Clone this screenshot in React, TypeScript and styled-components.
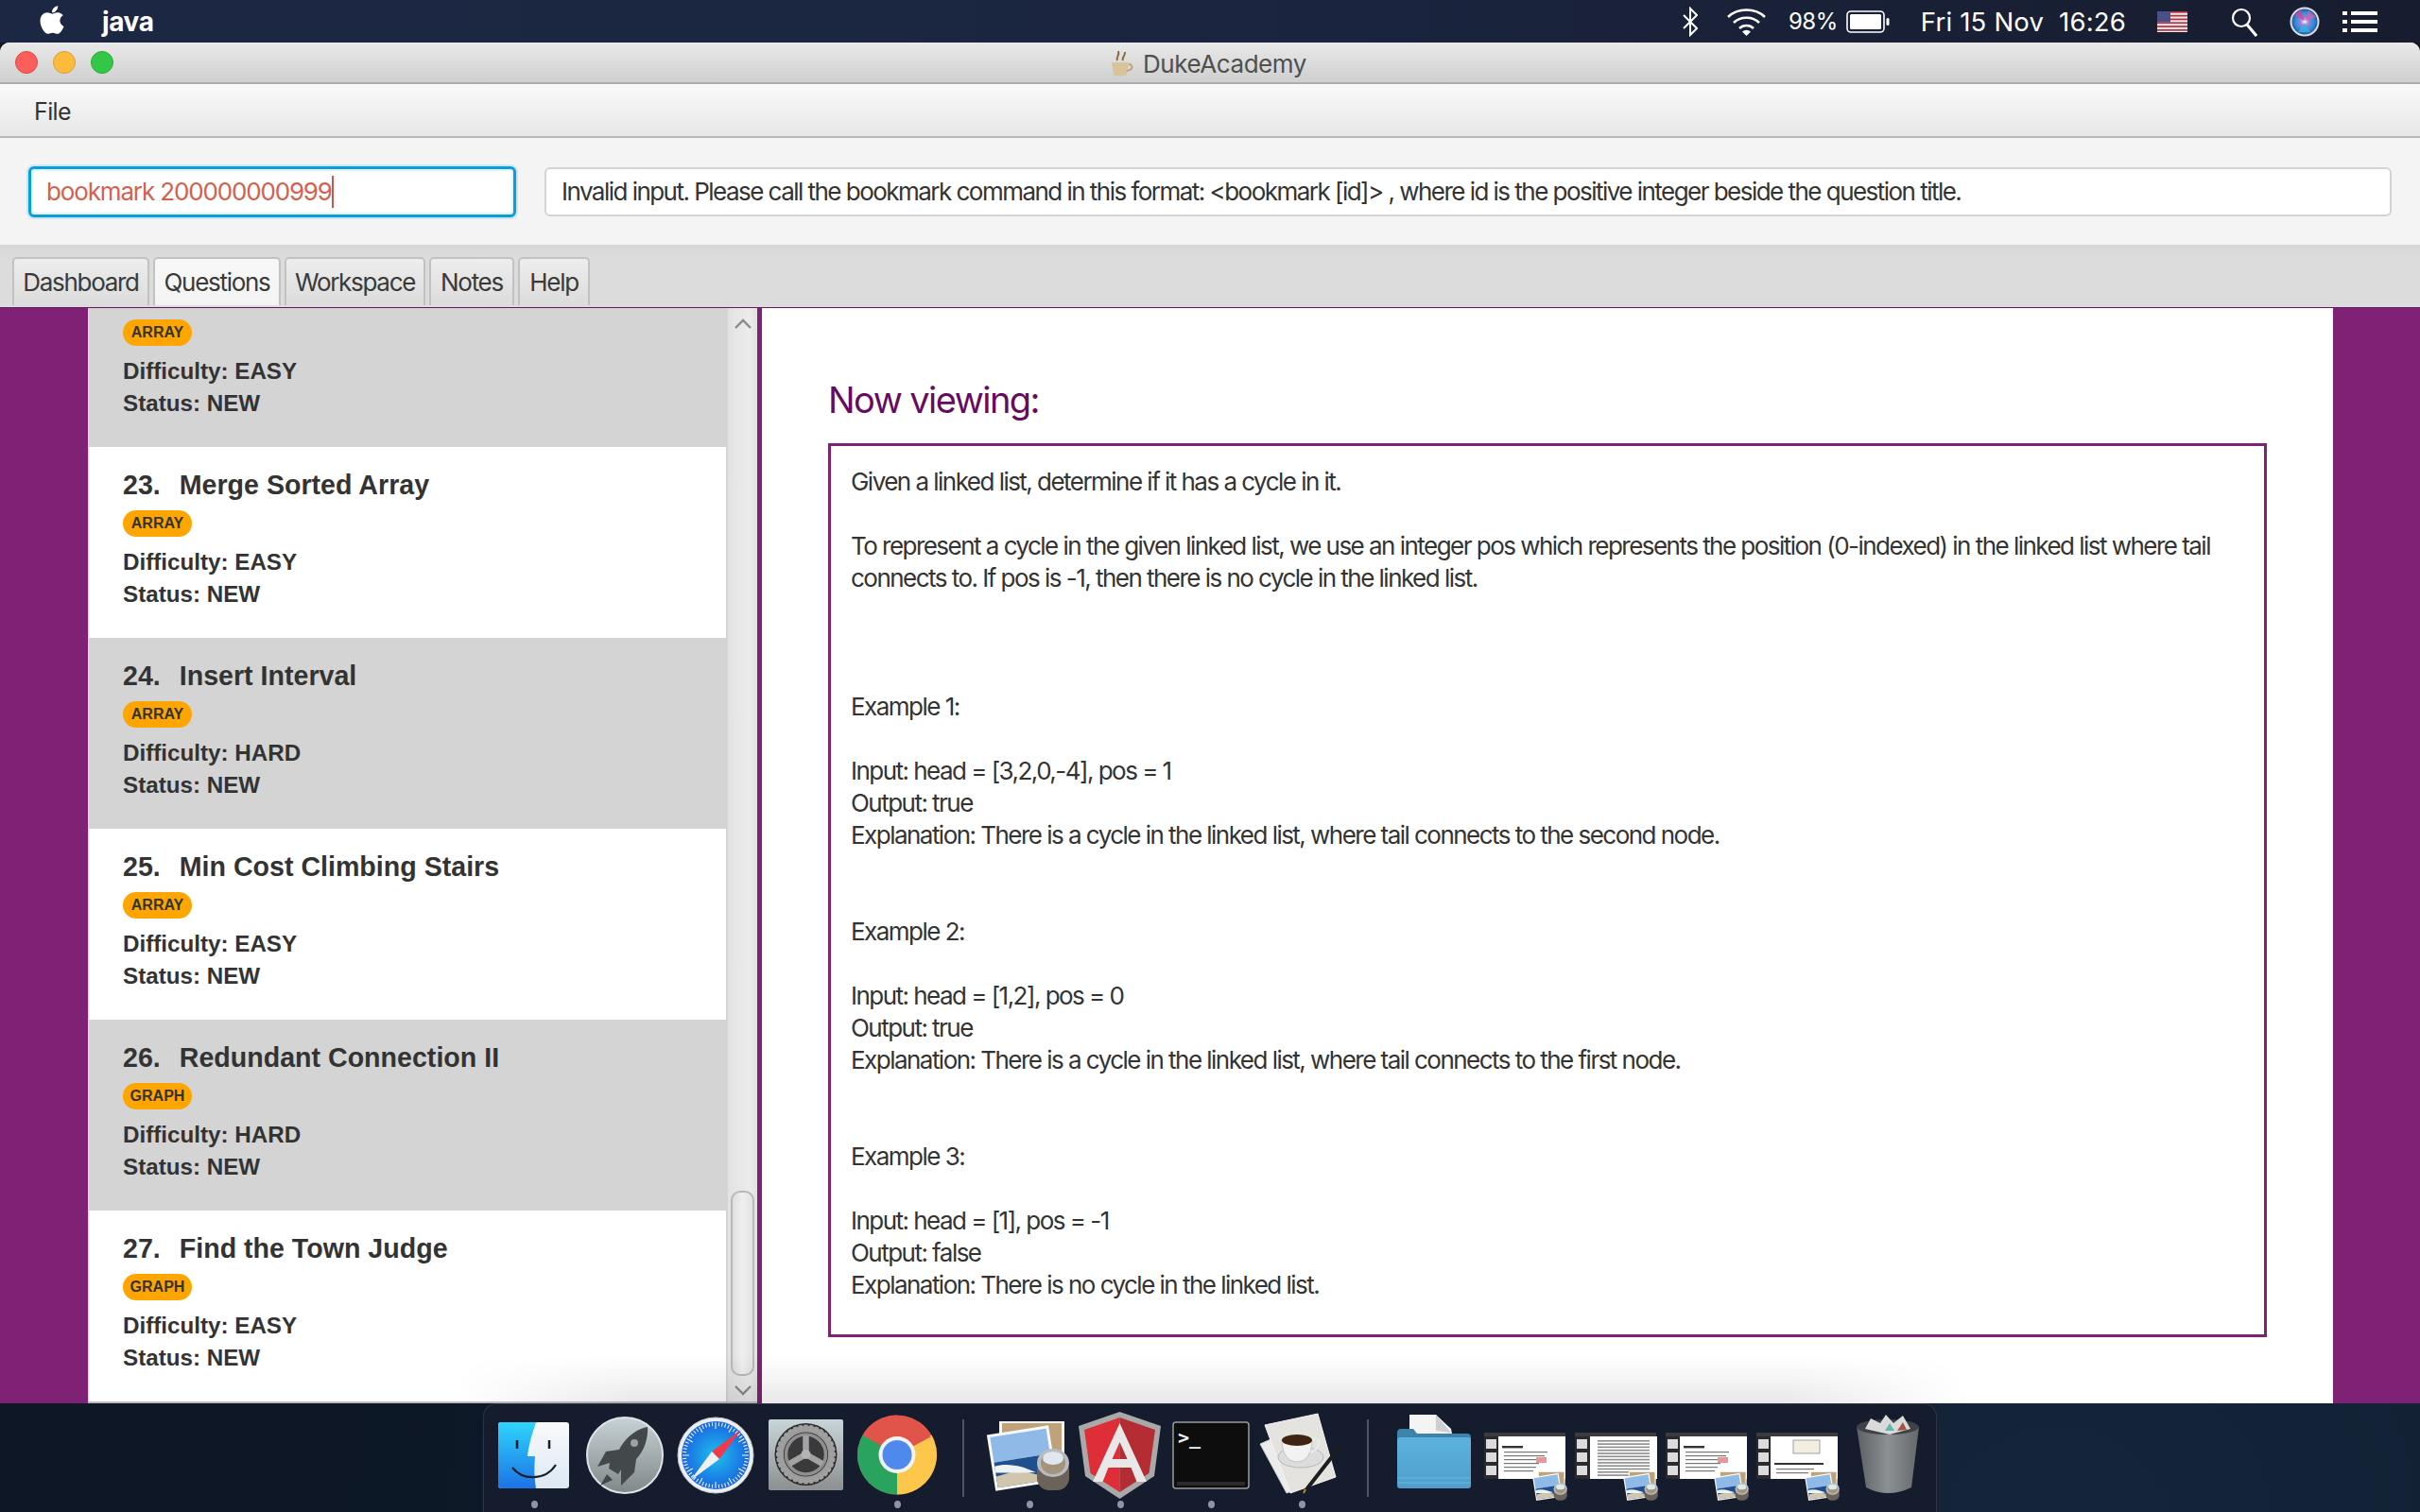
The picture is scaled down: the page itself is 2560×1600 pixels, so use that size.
import React from "react";
import styled, { createGlobalStyle } from "styled-components";
import { FaApple } from "react-icons/fa";

const Global = createGlobalStyle`
  html, body { margin: 0; padding: 0; background: #0f1a2b; }
  body { width: 2560px; height: 1600px; overflow: hidden; font-family: Inter, "Liberation Sans", sans-serif; }
  * { box-sizing: border-box; }
`;

const Screen = styled.div`
  width: 2560px; height: 1600px; display: flex; flex-direction: column; position: relative; overflow: hidden;
  background: radial-gradient(ellipse at 85% 100%, #14253a 0%, #0d1726 60%);
`;
const MenuBar = styled.header`
  height: 45px; flex: none; display: flex; align-items: center; padding: 0 45px 0 39px; color: #fff;
  background: linear-gradient(90deg, #1c2843 0%, #1b2540 50%, #171d2f 100%);
`;
const AppleMark = styled(FaApple)` width: 32px; height: 34px; margin-right: 37px; margin-top: -4px; `;
const AppName = styled.span` font-weight: 700; font-size: 28px; letter-spacing: -0.4px; `;
const Spacer = styled.div` flex: 1; `;
const StatusText = styled.span<{ $gap: number; $size: number; $track: number }>`
  font-size: ${p => p.$size}px; letter-spacing: ${p => p.$track}px; margin-left: ${p => p.$gap}px; white-space: pre;
`;
const StatusIcon = styled.svg<{ $gap: number }>` margin-left: ${p => p.$gap}px; flex: none; display: block; `;

const Window = styled.main`
  height: 1440px; flex: none; display: flex; flex-direction: column; position: relative;
  border-radius: 10px 10px 0 0; overflow: hidden; background: #f4f4f4;
`;
const TitleBar = styled.div`
  height: 44px; flex: none; position: relative; display: flex; align-items: center; justify-content: center; gap: 9px;
  background: linear-gradient(#e9e9e9, #cfcfcf); border-bottom: 2px solid #adadad;
  padding: 2px 6px 0 0; color: #4f4f4f; font-size: 26px; letter-spacing: -0.45px;
`;
const Lights = styled.div` position: absolute; left: 16px; top: 9px; display: flex; gap: 16px; `;
const Light = styled.span<{ $c: string; $b: string }>`
  width: 24px; height: 24px; border-radius: 50%; background: ${p => p.$c}; border: 1px solid ${p => p.$b};
`;
const MenuStrip = styled.nav`
  height: 57px; flex: none; display: flex; align-items: center; padding: 2px 0 0 36px;
  background: linear-gradient(#fafafa, #e7e7e7); border-bottom: 2px solid #b6b6b6;
  font-size: 25px; letter-spacing: -0.6px; color: #333;
`;
const CommandBar = styled.section`
  height: 113px; flex: none; display: flex; align-items: center; gap: 30px; padding: 0 30px; background: #f4f4f4;
`;
const CommandInput = styled.div`
  width: 516px; height: 54px; flex: none; display: flex; align-items: center; padding-left: 16px; background: #fff;
  border: 3px solid #0a9ed9; border-radius: 6px; box-shadow: 0 0 0 2px #cde6f3, inset 0 0 0 2px #e4f4fb;
  font-size: 26px; letter-spacing: -1.15px; color: #d5604e;
`;
const Caret = styled.span` display: inline-block; width: 2px; height: 34px; background: #c9584a; `;
const ResultBox = styled.div`
  flex: 1; height: 52px; display: flex; align-items: center; padding-left: 16px; background: #fff;
  border: 2px solid #d4d4d4; border-radius: 6px; font-size: 26px; letter-spacing: -1.53px; color: #333; white-space: pre;
`;
const TabStrip = styled.div`
  height: 66px; flex: none; display: flex; align-items: flex-end; gap: 4px; padding: 0 0 2px 13px;
  background: linear-gradient(#d6d6d6, #dcdcdc 20%);
`;
const Tab = styled.div<{ $w: number; $active?: boolean }>`
  width: ${p => p.$w}px; height: 51px; display: flex; align-items: center; justify-content: center;
  border: 2px solid #c2c2c2; border-bottom: none; border-radius: 5px 5px 0 0; color: #3a3a3a;
  background: ${p => (p.$active ? "linear-gradient(#f8f8f8, #f3f3f3)" : "linear-gradient(#ededed, #dcdcdc)")};
  font-size: 26px; letter-spacing: -1.3px;
`;
const Body = styled.div`
  flex: 1; min-height: 0; display: flex; background: #7f2175; padding: 0 92px 0 93px; position: relative; border-top: 1px solid #5e1a5a;
`;
const ListPane = styled.div`
  width: 708px; flex: none; display: flex; background: #d4d4d4; border-bottom: 2px solid #bdbdbd;
`;
const Cards = styled.div`
  width: 677px; flex: none; display: flex; flex-direction: column; justify-content: flex-end; overflow: hidden;
`;
const Card = styled.article<{ $white: boolean; $clipped?: boolean }>`
  height: ${p => (p.$clipped ? "148px" : "202px")}; flex: none; color: #333; font-family: "Liberation Sans", Arial, sans-serif;
  padding: ${p => (p.$clipped ? "13px" : "24px")} 0 0 36px; margin-right: 2px; margin-left: 1px;
  background: ${p => (p.$white ? "#fff" : "#d4d4d4")};
`;
const CardTitle = styled.h3`
  margin: 0; display: flex; gap: 20px; height: 32px; align-items: center; font-size: 28.6px; font-weight: 700;
`;
const Badge = styled.span<{ $topless?: boolean }>`
  display: block; width: 73px; height: 28px; margin-top: ${p => (p.$topless ? 0 : "11px")}; border-radius: 14px; background: #ffa500; text-align: center;
  font-size: 16px; line-height: 28px; font-weight: 700; color: #333;
`;
const Meta = styled.p`
  margin: 0; font-size: 24.2px; font-weight: 700; line-height: 34px;
  &:first-of-type { margin-top: 10px; }
`;
const Scroll = styled.div`
  width: 31px; flex: none; display: flex; flex-direction: column; align-items: center; background: linear-gradient(90deg, #e2e2e2, #ececec 70%, #e2e2e2);
`;
const Arrow = styled.svg` flex: none; display: block; margin: 10px 0 5px; `;
const Thumb = styled.div`
  width: 25px; height: 196px; margin-top: auto; flex: none; border: 2px solid #b9b9b9; border-radius: 10px; background: linear-gradient(90deg, #dedede, #f0f0f0 50%, #e2e2e2);
`;
const Detail = styled.section`
  flex: 1; min-width: 0; margin-left: 5px; background: #fff; padding: 69px 70px 0 70px; display: flex; flex-direction: column;
`;
const Heading = styled.h2`
  margin: 0 0 18px; height: 56px; line-height: 56px; font-size: 38px; font-weight: 400; letter-spacing: -1.55px; color: #660b5f;
`;
const Question = styled.pre`
  margin: 0; height: 946px; border: 3px solid #7f2175; padding: 21px 20px 21px 21px; font-family: inherit; white-space: pre-wrap;
  font-size: 26px; letter-spacing: -1.53px; line-height: 34px; color: #333;
`;
const Shade = styled.div`
  position: absolute; left: 480px; right: 480px; bottom: 0; height: 50px; pointer-events: none;
  background: linear-gradient(rgba(0,0,0,0), rgba(0,0,0,.09));
  mask-image: linear-gradient(90deg, transparent, #000 12%, #000 88%, transparent);
`;
const DockRow = styled.footer` flex: 1; min-height: 0; display: flex; justify-content: flex-start; padding-left: 511px; `;
const Dock = styled.nav`
  width: 1538px; display: flex; padding: 6px 0 0 5px; align-items: flex-start;
  background: #151c2d; border: 1px solid #2f3444; border-bottom: none; border-radius: 14px 14px 0 0;
`;
const Slot = styled.div` width: 96px; flex: none; display: flex; flex-direction: column; align-items: center; `;
const Dot = styled.span<{ $on: boolean }>`
  width: 7px; height: 8px; border-radius: 50%; background: ${p => (p.$on ? "#8f95a5" : "transparent")};
`;
const DockIcon = styled.svg` display: block; width: 96px; height: 96px; `;
const Divider = styled.div` width: 2px; height: 82px; margin: 10px 21px 0; flex: none; background: #4d5361; `;

const Finder = () => (
  <DockIcon viewBox="0 0 96 96">
    <defs>
      <linearGradient id="fb" x1="0" y1="0" x2="0" y2="1"><stop offset="0" stopColor="#2ed5fb" /><stop offset="1" stopColor="#1c72e6" /></linearGradient>
      <linearGradient id="fw" x1="0" y1="0" x2="0" y2="1"><stop offset="0" stopColor="#fafafa" /><stop offset="1" stopColor="#dce8f3" /></linearGradient>
    </defs>
    <rect x="10" y="13" width="75" height="70" rx="3" fill="url(#fw)" />
    <path d="M13 13H50C46 25 42 38 41 49H49C48 60 48 72 50 83H13a3 3 0 0 1-3-3V16a3 3 0 0 1 3-3Z" fill="url(#fb)" />
    <path d="M30 32v9M64 32v9" stroke="#1a1f2c" strokeWidth="2.5" />
    <path d="M25 61C36 75 60 75 71 58" fill="none" stroke="#16202e" strokeWidth="2.2" />
  </DockIcon>
);
const Rocket = () => (
  <DockIcon viewBox="0 0 96 96">
    <defs>
      <linearGradient id="rg" x1="0" y1="0" x2="0" y2="1"><stop offset="0" stopColor="#c8d3d6" /><stop offset="1" stopColor="#7f8789" /></linearGradient>
    </defs>
    <circle cx="48" cy="48" r="40" fill="url(#rg)" stroke="#dfe3e4" strokeWidth="2" />
    <path d="M72 18C60 20 48 30 42 42L28 44 19 60 32 56 31 62 41 68 44 63 44 80 58 66 60 52C68 44 73 30 72 18Z" fill="#43484b" />
    <circle cx="58" cy="35" r="4" fill="#9aa2a5" />
    <path d="M29 68 22 80 35 74Z" fill="#43484b" />
  </DockIcon>
);
const Safari = () => (
  <DockIcon viewBox="0 0 96 96">
    <defs>
      <radialGradient id="sg"><stop offset="0" stopColor="#1dc0ee" /><stop offset="1" stopColor="#1a66e0" /></radialGradient>
    </defs>
    <circle cx="48" cy="48" r="40" fill="#eceff2" stroke="#c3c7cc" />
    <circle cx="48" cy="48" r="36" fill="url(#sg)" />
    {Array.from({ length: 60 }, (_, i) => (
      <line key={i} x1="48" y1="13" x2="48" y2={i % 5 === 0 ? 20 : 17} stroke="#fff" strokeWidth="1" transform={`rotate(${i * 6} 48 48)`} />
    ))}
    <path d="M75 21 52 52 44 44Z" fill="#f2394a" />
    <path d="M21 75 44 44 52 52Z" fill="#eef0f2" />
  </DockIcon>
);
const Settings = () => (
  <DockIcon viewBox="0 0 96 96">
    <defs>
      <linearGradient id="sb" x1="0" y1="0" x2="0" y2="1"><stop offset="0" stopColor="#c9d5da" /><stop offset="1" stopColor="#8d8f90" /></linearGradient>
    </defs>
    <rect x="8" y="10" width="79" height="75" rx="2" fill="url(#sb)" />
    <circle cx="47.5" cy="47" r="33" fill="#2a2a2c" />
    <circle cx="47.5" cy="47" r="27" fill="none" stroke="#9b9b9b" strokeWidth="7" />
    {Array.from({ length: 32 }, (_, i) => (
      <rect key={i} x="45.5" y="15.5" width="4" height="6" fill="#a0a0a0" transform={`rotate(${i * 11.25} 47.5 47)`} />
    ))}
    <circle cx="47.5" cy="47" r="23" fill="#3a3a3c" />
    <circle cx="47.5" cy="47" r="21" fill="none" stroke="#8f8f8f" strokeWidth="3.5" />
    <g stroke="#a2a2a2" strokeWidth="6.5" strokeLinecap="butt">
      <path d="M47.5 47V27M47.5 47 30 57M47.5 47 65 57" />
    </g>
    <circle cx="47.5" cy="47" r="5" fill="#b4b4b4" />
  </DockIcon>
);
const Chrome = () => (
  <DockIcon viewBox="0 0 96 96">
    <circle cx="48" cy="47.5" r="42" fill="#e0544a" />
    <path d="M48 47.5 84.4 26.5A42 42 0 0 1 48 89.5Z" fill="#fdc74c" />
    <path d="M48 47.5 48 89.5A42 42 0 0 1 11.6 26.5Z" fill="#2aa35e" />
    <path d="M48 47.5 11.6 26.5A42 42 0 0 1 48 5.5Z" fill="#e0544a" />
    <path d="M48 28H84.4L48 47.5Z" fill="#df5349" />
    <circle cx="48" cy="47.5" r="19.5" fill="#f3f3f3" />
    <circle cx="48" cy="47.5" r="15.5" fill="#5089ee" />
  </DockIcon>
);
const Loupe = ({ x, y, s }: { x: number; y: number; s: number }) => (
  <g transform={`translate(${x} ${y}) scale(${s})`}>
    <rect x="0" y="10" width="34" height="34" rx="13" fill="#6b635a" />
    <ellipse cx="17" cy="15" rx="17" ry="15" fill="#b9bcbf" />
    <ellipse cx="17" cy="15" rx="13" ry="12" fill="#a5937d" />
    <ellipse cx="17" cy="10" rx="11" ry="7" fill="#dfe8ef" />
  </g>
);
const Photo = () => (
  <>
    <rect x="16" y="12" width="69" height="42" fill="#f6f4ee" />
    <rect x="19" y="14" width="63" height="38" fill="#bda27a" />
    <g transform="rotate(-9 40 50)">
      <rect x="7" y="21" width="66" height="60" fill="#f7f7f7" />
      <rect x="10" y="24" width="60" height="27" fill="#8fb9e6" />
      <rect x="10" y="51" width="60" height="27" fill="#1f4f8c" />
      <path d="M10 66 35 63 70 78H10Z" fill="#d0c5ad" />
      <path d="M10 55C25 53 40 60 52 68L35 66 10 62Z" fill="#eef2f5" />
    </g>
  </>
);
const Preview = () => (
  <DockIcon viewBox="0 0 96 96">
    <Photo />
    <Loupe x={56} y={41} s={1} />
  </DockIcon>
);
const Angular = () => (
  <DockIcon viewBox="0 0 96 96">
    <path d="M47.5 2 4 17 11 70 47.5 94 84 70 91 17Z" fill="#a9a9a9" />
    <path d="M47.5 8 10 21 16.5 67 47.5 87Z" fill="#de2f38" />
    <path d="M47.5 8 85 21 78.5 67 47.5 87Z" fill="#b42d32" />
    <path d="M47.5 14 19 76H29.5L35.5 61H59.5L65.5 76H76ZM47.5 34 55.5 52H39.5Z" fill="#e8e8e8" fillRule="evenodd" />
  </DockIcon>
);
const TermGlyph = styled.text` font-family: "DejaVu Sans Mono", monospace; font-size: 20px; font-weight: 700; fill: #f2f2f2; `;
const Terminal = () => (
  <DockIcon viewBox="0 0 96 96">
    <rect x="8" y="13" width="80" height="70" rx="3" fill="#0d0d0d" stroke="#9b9b9b" strokeWidth="1.5" />
    <rect x="12" y="76" width="72" height="4" fill="#2b2b2b" />
    <TermGlyph x="13" y="36">&gt;_</TermGlyph>
  </DockIcon>
);
const TextEdit = () => (
  <DockIcon viewBox="0 0 96 96">
    <path d="M4 36 36 22 62 76 32 88Z" fill="#ececec" stroke="#cfcfcf" />
    <path d="M9 16 65 4 84 71 36 88Z" fill="#e4e3e0" stroke="#f5f5f5" />
    <ellipse cx="47" cy="50" rx="24" ry="11" fill="#dcdcdc" stroke="#b8b8b8" />
    <path d="M27 32C30 27 56 27 59 32 59 44 54 55 43 55 32 55 27 44 27 32Z" fill="#f2f2f2" stroke="#c3c3c3" />
    <ellipse cx="43" cy="32" rx="16" ry="6" fill="#3e2411" />
    <path d="M59 31c10-4 10 10-2 14" fill="none" stroke="#e9e9e9" strokeWidth="3" />
    <path d="M50 88 89 38" stroke="#1d1d1d" strokeWidth="4" />
    <path d="M50 88 52 84" stroke="#b58c3b" strokeWidth="2" />
  </DockIcon>
);
const Folder = () => (
  <DockIcon viewBox="0 0 96 96">
    <defs>
      <linearGradient id="fd" x1="0" y1="0" x2="0" y2="1"><stop offset="0" stopColor="#5cb2de" /><stop offset="1" stopColor="#4f9ecb" /></linearGradient>
    </defs>
    <path d="M22 5H50L66 20 70 40H22Z" fill="#f4f4f4" />
    <path d="M50 5 66 24 50 22Z" fill="#cfcfcf" />
    <path d="M9 24q0-4 4-4H26l4 5H83q4 0 4 4V35H9Z" fill="#3f83ab" />
    <rect x="9" y="29" width="78" height="54" rx="3" fill="url(#fd)" />
    <path d="M9 72H87M9 77H87" stroke="#6cb6dc" strokeWidth="1" />
  </DockIcon>
);
type DocKind = 0 | 1 | 2 | 3;
const MiniDoc = ({ kind }: { kind: DocKind }) => (
  <DockIcon viewBox="0 0 96 96">
    <rect x="5" y="24" width="86" height="49" fill="#2a2a2c" />
    <rect x="5" y="24" width="86" height="4" fill="#3b3b3d" />
    <rect x={kind === 1 ? 21 : 20} y="28" width="71" height="45" fill="#fff" />
    {[0, 1, 2].map(i => (
      <rect key={i} x="7" y={31 + i * 14} width="11" height="10" fill="#dcdcdc" />
    ))}
    {kind === 1 ? (
      Array.from({ length: 12 }, (_, i) => <rect key={i} x="29" y={32 + i * 3.3} width="55" height="1.6" fill="#8c8c8c" />)
    ) : kind === 3 ? (
      <>
        <rect x="44" y="32" width="28" height="14" fill="#f2efe0" stroke="#8c8c8c" strokeWidth=".8" />
        <rect x="24" y="56" width="52" height="2" fill="#333" />
        <rect x="26" y="62" width="40" height="1.2" fill="#777" />
        <rect x="26" y="66" width="34" height="1.2" fill="#777" />
      </>
    ) : (
      <>
        <rect x="24" y="38" width="22" height="2.4" fill="#333" />
        {[44, 48, 52, 56, 60, 64].map((y, i) => (
          <rect key={y} x="26" y={y} width={46 - i * 3} height="1.2" fill="#777" />
        ))}
        <rect x="60" y="50" width="11" height="6" fill="#e79797" />
      </>
    )}
    <g transform="translate(55 60) scale(.42)">
      <Photo />
      <Loupe x={56} y={41} s={1} />
    </g>
  </DockIcon>
);
const Trash = () => (
  <DockIcon viewBox="0 0 96 96">
    <defs>
      <linearGradient id="tg" x1="0" y1="0" x2="1" y2="0"><stop offset="0" stopColor="#5c6063" /><stop offset=".5" stopColor="#8d9093" /><stop offset="1" stopColor="#64686b" /></linearGradient>
    </defs>
    <path d="M15 18 81 18 73 82Q48 94 25 82Z" fill="url(#tg)" />
    <ellipse cx="48" cy="18" rx="33" ry="8" fill="#3f4347" />
    <path d="M24 20 30 9 40 14 46 5 54 14 64 6 72 20 50 26Z" fill="#dadada" />
    <path d="M45 22 50 14 55 22Z" fill="#5fb8a8" />
    <path d="M58 22 64 13 68 21Z" fill="#a8523d" />
  </DockIcon>
);

const Duke = () => (
  <svg width="28" height="30" viewBox="0 0 28 30">
    <path d="M4 14h18l-2 13q-7 3-14 0Z" fill="#d8c39a" />
    <path d="M22 16c5 0 5 6-2 7" fill="none" stroke="#bca67c" strokeWidth="2" />
    <path d="M10 12c-2-4 3-5 1-10M16 12c-2-3 3-5 2-9" fill="none" stroke="#8a6a3b" strokeWidth="2" />
  </svg>
);

const questionText = `Given a linked list, determine if it has a cycle in it.

To represent a cycle in the given linked list, we use an integer pos which represents the position (0-indexed) in the linked list where tail
connects to. If pos is -1, then there is no cycle in the linked list.



Example 1:

Input: head = [3,2,0,-4], pos = 1
Output: true
Explanation: There is a cycle in the linked list, where tail connects to the second node.


Example 2:

Input: head = [1,2], pos = 0
Output: true
Explanation: There is a cycle in the linked list, where tail connects to the first node.


Example 3:

Input: head = [1], pos = -1
Output: false
Explanation: There is no cycle in the linked list.`;

const tabs = [
  { label: "Dashboard", w: 145 },
  { label: "Questions", w: 135, active: true },
  { label: "Workspace", w: 149 },
  { label: "Notes", w: 90 },
  { label: "Help", w: 76 },
];
const questions = [
  { tag: "ARRAY", diff: "EASY" },
  { no: "23.", title: "Merge Sorted Array", tag: "ARRAY", diff: "EASY" },
  { no: "24.", title: "Insert Interval", tag: "ARRAY", diff: "HARD" },
  { no: "25.", title: "Min Cost Climbing Stairs", tag: "ARRAY", diff: "EASY" },
  { no: "26.", title: "Redundant Connection II", tag: "GRAPH", diff: "HARD" },
  { no: "27.", title: "Find the Town Judge", tag: "GRAPH", diff: "EASY" },
];
const dockA = [
  { el: <Finder />, on: true }, { el: <Rocket />, on: false }, { el: <Safari />, on: false },
  { el: <Settings />, on: false }, { el: <Chrome />, on: true },
];
const dockB = [
  { el: <Preview />, on: true }, { el: <Angular />, on: true }, { el: <Terminal />, on: true }, { el: <TextEdit />, on: true },
];
const dockC = [
  { el: <Folder />, on: false }, { el: <MiniDoc kind={0} />, on: false }, { el: <MiniDoc kind={1} />, on: false },
  { el: <MiniDoc kind={2} />, on: false }, { el: <MiniDoc kind={3} />, on: false }, { el: <Trash />, on: false },
];
const renderSlots = (items: { el: React.ReactNode; on: boolean }[]) =>
  items.map((it, i) => (
    <Slot key={i}>
      {it.el}
      <Dot $on={it.on} />
    </Slot>
  ));

export default function App() {
  return (
    <Screen>
      <Global />
      <MenuBar>
        <AppleMark />
        <AppName>java</AppName>
        <Spacer />
        <StatusIcon $gap={0} width="16" height="32" viewBox="0 0 16 32" fill="none" stroke="#fff" strokeWidth="2">
          <path d="M1 9 15 23 8 30V2L15 9 1 23" />
        </StatusIcon>
        <StatusIcon $gap={30} width="43" height="32" viewBox="0 0 43 32" fill="none" stroke="#fff" strokeWidth="2.6">
          <path d="M2 11C12 1 31 1 41 11M8 17C15 10 28 10 35 17M14 23C18 19 25 19 29 23" />
          <path d="M21.5 31 17 26.5Q21.5 23 26 26.5Z" fill="#fff" stroke="none" />
        </StatusIcon>
        <StatusText $gap={23} $size={24} $track={-0.5}>98%</StatusText>
        <StatusIcon $gap={9} width="46" height="24" viewBox="0 0 46 24">
          <rect x="1" y="1" width="39" height="22" rx="4" fill="none" stroke="#fff" strokeWidth="1.6" />
          <rect x="4" y="4" width="33" height="16" rx="1.5" fill="#fff" />
          <rect x="42.5" y="8" width="3" height="8" rx="1.5" fill="#fff" />
        </StatusIcon>
        <StatusText $gap={33} $size={27.5} $track={0.2}>Fri 15 Nov  16:26</StatusText>
        <StatusIcon $gap={33} width="32" height="22" viewBox="0 0 32 22">
          <rect width="32" height="22" fill="#e8e8ee" />
          {[0, 2, 4, 6, 8, 10].map(i => <rect key={i} y={i * 1.9} width="32" height="1.7" fill="#b5343a" />)}
          <rect width="14" height="11.5" fill="#4a4f85" />
        </StatusIcon>
        <StatusIcon $gap={46} width="28" height="32" viewBox="0 0 28 32" fill="none" stroke="#fff">
          <circle cx="11" cy="12" r="9" strokeWidth="2.2" />
          <path d="M17 19 27 31" strokeWidth="3" />
        </StatusIcon>
        <StatusIcon $gap={34} width="32" height="32" viewBox="0 0 32 32">
          <defs>
            <radialGradient id="siri"><stop offset="0" stopColor="#fff" /><stop offset=".3" stopColor="#a77fd8" /><stop offset=".7" stopColor="#2f8fe0" /><stop offset="1" stopColor="#2a5a9e" /></radialGradient>
          </defs>
          <circle cx="16" cy="16" r="15.5" fill="#d8dde2" />
          <circle cx="16" cy="16" r="13.5" fill="url(#siri)" />
          <path d="M5 9 16 15 12 3Z" fill="#d0479a" opacity=".8" />
          <path d="M20 4 17 15 28 11Z" fill="#e35fa8" opacity=".7" />
          <path d="M16 17 9 27 22 27Z" fill="#34b8d8" opacity=".7" />
        </StatusIcon>
        <StatusIcon $gap={24} width="37" height="24" viewBox="0 0 37 24" fill="#fff">
          <rect y="1" width="5" height="4" /><rect y="10" width="5" height="4" /><rect y="19" width="5" height="4" />
          <rect x="9" y="1" width="28" height="4" /><rect x="9" y="10" width="28" height="4" /><rect x="9" y="19" width="28" height="4" />
        </StatusIcon>
      </MenuBar>
      <Window>
        <TitleBar>
          <Lights>
            <Light $c="#fc5f5b" $b="#df4744" />
            <Light $c="#fdbb3c" $b="#dd9d2e" />
            <Light $c="#33c748" $b="#27aa36" />
          </Lights>
          <Duke />
          <span>DukeAcademy</span>
        </TitleBar>
        <MenuStrip>File</MenuStrip>
        <CommandBar>
          <CommandInput>bookmark 200000000999<Caret /></CommandInput>
          <ResultBox>Invalid input. Please call the bookmark command in this format: &lt;bookmark [id]&gt; , where id is the positive integer beside the question title.</ResultBox>
        </CommandBar>
        <TabStrip>
          {tabs.map(t => <Tab key={t.label} $w={t.w} $active={t.active}>{t.label}</Tab>)}
        </TabStrip>
        <Body>
          <ListPane>
            <Cards>
              {questions.map((q, i) => (
                <Card key={i} $white={i % 2 === 1} $clipped={!q.title}>
                  {q.title && <CardTitle><span>{q.no}</span><span>{q.title}</span></CardTitle>}
                  <Badge $topless={!q.title}>{q.tag}</Badge>
                  <Meta>Difficulty: {q.diff}</Meta>
                  <Meta>Status: NEW</Meta>
                </Card>
              ))}
            </Cards>
            <Scroll>
              <Arrow width="20" height="12" viewBox="0 0 20 12" fill="none" stroke="#8a8a8a" strokeWidth="2.4"><path d="M2 11 10 3 18 11" /></Arrow>
              <Thumb />
              <Arrow width="20" height="12" viewBox="0 0 20 12" fill="none" stroke="#8a8a8a" strokeWidth="2.4"><path d="M2 1 10 9 18 1" /></Arrow>
            </Scroll>
          </ListPane>
          <Detail>
            <Heading>Now viewing:</Heading>
            <Question>{questionText}</Question>
          </Detail>
          <Shade />
        </Body>
      </Window>
      <DockRow>
        <Dock>
          {renderSlots(dockA)}
          <Divider />
          {renderSlots(dockB)}
          <Divider />
          {renderSlots(dockC)}
        </Dock>
      </DockRow>
    </Screen>
  );
}
